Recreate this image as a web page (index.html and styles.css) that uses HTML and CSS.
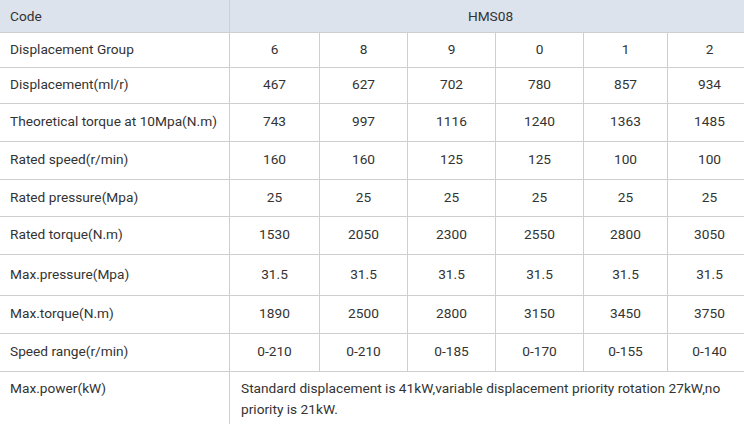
FILE: index.html
```html
<!DOCTYPE html>
<html>
<head>
<meta charset="utf-8">
<link rel="stylesheet" href="styles.css">
</head>
<body>
<div class="spec">
  <div class="cell head label">Code</div>
  <div class="cell head span">HMS08</div>

  <div class="cell label">Displacement Group</div>
  <div class="cell">6</div><div class="cell">8</div><div class="cell">9</div><div class="cell">0</div><div class="cell">1</div><div class="cell">2</div>

  <div class="cell label">Displacement(ml/r)</div>
  <div class="cell">467</div><div class="cell">627</div><div class="cell">702</div><div class="cell">780</div><div class="cell">857</div><div class="cell">934</div>

  <div class="cell label">Theoretical torque at 10Mpa(N.m)</div>
  <div class="cell">743</div><div class="cell">997</div><div class="cell">1116</div><div class="cell">1240</div><div class="cell">1363</div><div class="cell">1485</div>

  <div class="cell label">Rated speed(r/min)</div>
  <div class="cell">160</div><div class="cell">160</div><div class="cell">125</div><div class="cell">125</div><div class="cell">100</div><div class="cell">100</div>

  <div class="cell label">Rated pressure(Mpa)</div>
  <div class="cell">25</div><div class="cell">25</div><div class="cell">25</div><div class="cell">25</div><div class="cell">25</div><div class="cell">25</div>

  <div class="cell label">Rated torque(N.m)</div>
  <div class="cell">1530</div><div class="cell">2050</div><div class="cell">2300</div><div class="cell">2550</div><div class="cell">2800</div><div class="cell">3050</div>

  <div class="cell label">Max.pressure(Mpa)</div>
  <div class="cell">31.5</div><div class="cell">31.5</div><div class="cell">31.5</div><div class="cell">31.5</div><div class="cell">31.5</div><div class="cell">31.5</div>

  <div class="cell label">Max.torque(N.m)</div>
  <div class="cell">1890</div><div class="cell">2500</div><div class="cell">2800</div><div class="cell">3150</div><div class="cell">3450</div><div class="cell">3750</div>

  <div class="cell label">Speed range(r/min)</div>
  <div class="cell">0-210</div><div class="cell">0-210</div><div class="cell">0-185</div><div class="cell">0-170</div><div class="cell">0-155</div><div class="cell">0-140</div>

  <div class="cell label top">Max.power(kW)</div>
  <div class="cell span top text">Standard displacement is 41kW,variable displacement priority rotation 27kW,no priority is 21kW.</div>
</div>
</body>
</html>
```
FILE: styles.css
```css
html, body {
  margin: 0;
  padding: 0;
  overflow: hidden;
  background: #fff;
}

.spec {
  display: grid;
  grid-template-columns: 229px 89px 87px 87px 87px 83px 83px;
  grid-template-rows: 32px 34px 35px 37px 37px 36px 37px 40px 37px 37px auto;
  gap: 1px;
  background: #cfcfcf;
  width: 751px;
  font-family: Roboto, "Liberation Sans", Arial, sans-serif;
  font-size: 13.7px;
  color: #333;
}

.cell {
  background: #fff;
  display: flex;
  align-items: center;
  justify-content: center;
  line-height: 21px;
  padding-bottom: 2px;
}

.head {
  background: #dce3ed;
  padding-bottom: 0;
}

.label {
  justify-content: flex-start;
  padding-left: 10px;
}

.span {
  grid-column: 2 / 8;
}

.top {
  align-items: flex-start;
  padding-top: 6px;
  padding-bottom: 20px;
}

.text {
  justify-content: flex-start;
  padding-left: 11px;
  padding-right: 10px;
}
```
